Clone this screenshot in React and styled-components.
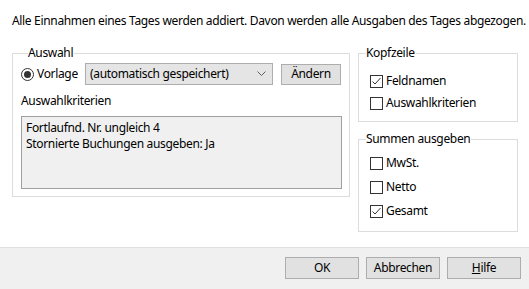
import React from 'react';
import styled, { createGlobalStyle } from 'styled-components';

const GlobalStyle = createGlobalStyle`
  html, body {
    margin: 0;
    padding: 0;
    background: #ffffff;
  }
  body {
    font-family: "Noto Sans", "Liberation Sans", sans-serif;
    font-size: 12px;
    line-height: 16px;
    letter-spacing: -0.33px;
    color: #000;
  }
`;

const Dialog = styled.div`
  width: 529px;
  height: 289px;
  display: flex;
  flex-direction: column;
  overflow: hidden;
`;

const Main = styled.div`
  flex: 1;
  padding: 13px 11px 0 12px;
`;

const Intro = styled.div`
  white-space: nowrap;
  margin-bottom: 16px;
`;

const Columns = styled.div`
  display: flex;
  gap: 8px;
  align-items: flex-start;
`;

const RightColumn = styled.div`
  display: flex;
  flex-direction: column;
  gap: 9px;
  width: 160px;
`;

const Group = styled.fieldset`
  margin: 0;
  border: 1px solid #dcdcdc;
  padding: ${(p) => p.$pad || '0'};
  width: ${(p) => p.$width || 'auto'};
  box-sizing: border-box;
  min-width: 0;
`;

const Legend = styled.legend`
  padding: 0 1px 0 0;
  margin-left: 7px;
  line-height: 16px;
`;

const SelectRow = styled.div`
  display: flex;
  align-items: center;
  height: 22px;
  margin-top: 2px;
`;

const Radio = styled.span`
  width: 13px;
  height: 13px;
  box-sizing: border-box;
  border: 1px solid #333;
  border-radius: 50%;
  display: flex;
  align-items: center;
  justify-content: center;
  margin-right: 3px;
  background: #fff;

  &::after {
    content: '';
    width: 7px;
    height: 7px;
    border-radius: 50%;
    background: #333;
  }
`;

const RadioLabel = styled.span`
  width: 48px;
`;

const Combo = styled.div`
  width: 188px;
  height: 22px;
  box-sizing: border-box;
  border: 1px solid #adadad;
  background: #e5e5e5;
  display: flex;
  align-items: center;
  justify-content: space-between;
  padding: 0 6px 0 4px;
  margin-right: 8px;
`;

const Button = styled.button`
  font: inherit;
  letter-spacing: inherit;
  color: #000;
  width: ${(p) => p.$width || '74px'};
  height: ${(p) => p.$height || '22px'};
  box-sizing: border-box;
  border: 1px solid #adadad;
  background: #e1e1e1;
  padding: 0;
  line-height: 16px;
`;

const FieldLabel = styled.div`
  margin-top: 8px;
`;

const Criteria = styled.div`
  margin-top: 7px;
  height: 73px;
  box-sizing: border-box;
  border: 1px solid #a0a0a0;
  background: #f0f0f0;
  padding: 3px 4px;
`;

const CheckRow = styled.label`
  display: flex;
  align-items: center;
  height: ${(p) => p.$height || '22px'};
  padding-left: 11px;
`;

const Box = styled.span`
  width: 13px;
  height: 13px;
  box-sizing: border-box;
  border: 1px solid #333;
  background: #fff;
  margin-right: 3px;
  display: flex;
  align-items: center;
  justify-content: center;
`;

const Footer = styled.div`
  height: 42px;
  box-sizing: border-box;
  border-top: 1px solid #dfdfdf;
  background: #f0f0f0;
  display: flex;
  justify-content: flex-end;
  gap: 7px;
  padding: 9px 8px 0 0;
`;

const Mnemonic = styled.span`
  text-decoration: underline;
`;

function Chevron() {
  return (
    <svg width="9" height="6" viewBox="0 0 9 6">
      <polyline points="0.5,0.5 4.5,4.5 8.5,0.5" fill="none" stroke="#606060" strokeWidth="1" />
    </svg>
  );
}

function Checkbox({ checked, label, height }) {
  return (
    <CheckRow $height={height}>
      <Box>
        {checked && (
          <svg width="11" height="11" viewBox="0 0 11 11">
            <polyline points="1.5,5.5 4,8 9.5,2" fill="none" stroke="#333" strokeWidth="1" />
          </svg>
        )}
      </Box>
      {label}
    </CheckRow>
  );
}

export default function App() {
  return (
    <Dialog>
      <GlobalStyle />
      <Main>
        <Intro>
          Alle Einnahmen eines Tages werden addiert. Davon werden alle Ausgaben des Tages abgezogen.
        </Intro>
        <Columns>
          <Group $width="338px" $pad="0 7px 7px 8px">
            <Legend>Auswahl</Legend>
            <SelectRow>
              <Radio />
              <RadioLabel>Vorlage</RadioLabel>
              <Combo>
                <span>(automatisch gespeichert)</span>
                <Chevron />
              </Combo>
              <Button $width="60px" $height="21px">Ändern</Button>
            </SelectRow>
            <FieldLabel>Auswahlkriterien</FieldLabel>
            <Criteria>
              Fortlaufnd. Nr. ungleich 4
              <br />
              Stornierte Buchungen ausgeben: Ja
            </Criteria>
          </Group>
          <RightColumn>
            <Group $pad="9px 0 7px 0">
              <Legend>Kopfzeile</Legend>
              <Checkbox checked label="Feldnamen" />
              <Checkbox label="Auswahlkriterien" />
            </Group>
            <Group $pad="4px 0 8px 0">
              <Legend>Summen ausgeben</Legend>
              <Checkbox label="MwSt." height="24px" />
              <Checkbox label="Netto" height="24px" />
              <Checkbox checked label="Gesamt" height="24px" />
            </Group>
          </RightColumn>
        </Columns>
      </Main>
      <Footer>
        <Button>OK</Button>
        <Button>Abbrechen</Button>
        <Button>
          <Mnemonic>H</Mnemonic>ilfe
        </Button>
      </Footer>
    </Dialog>
  );
}
